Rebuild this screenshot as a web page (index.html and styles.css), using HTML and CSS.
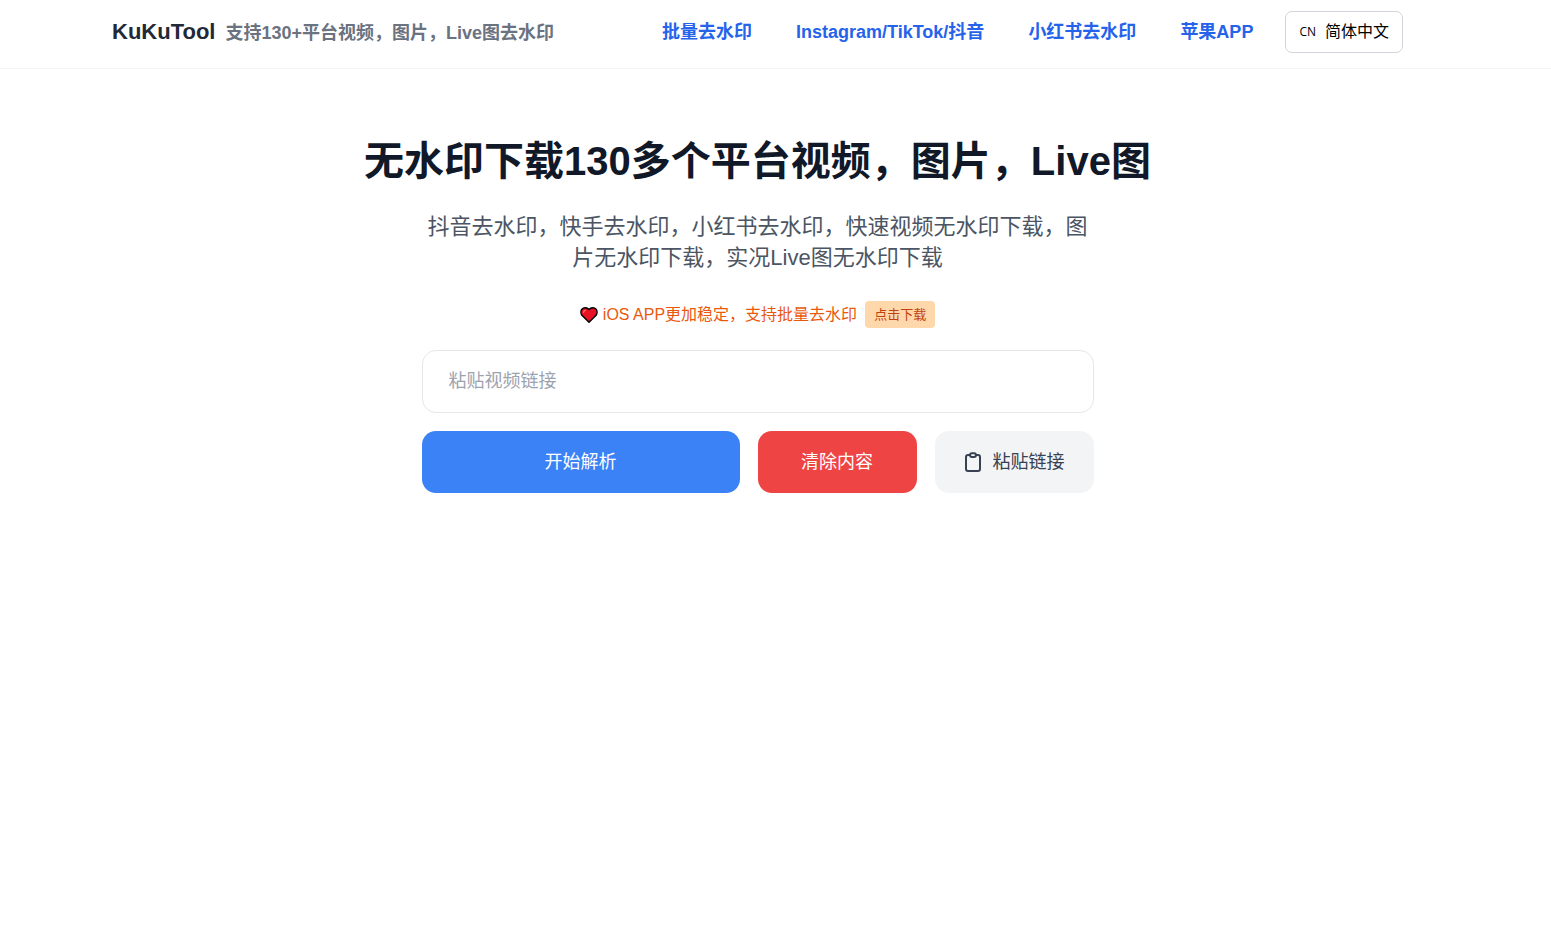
FILE: index.html
```html
<!DOCTYPE html>
<html lang="zh-CN">
<head>
<meta charset="utf-8">
<meta name="viewport" content="width=device-width, initial-scale=1">
<title>KuKuTool</title>
<link rel="stylesheet" href="styles.css">
</head>
<body>
<header class="site-header">
  <div class="header-inner">
    <div class="brand">
      <a class="brand-name" href="#">KuKuTool</a>
      <span class="brand-note">支持130+平台视频，图片，Live图去水印</span>
    </div>
    <div class="header-right">
      <nav class="nav">
        <a href="#">批量去水印</a>
        <a href="#">Instagram/TikTok/抖音</a>
        <a href="#">小红书去水印</a>
        <a href="#">苹果APP</a>
      </nav>
      <button class="lang" type="button"><span class="lang-code">CN</span><span>简体中文</span></button>
    </div>
  </div>
</header>
<main class="main">
  <h1 class="title">无水印下载130多个平台视频，图片，Live图</h1>
  <p class="subtitle">抖音去水印，快手去水印，小红书去水印，快速视频无水印下载，图片无水印下载，实况Live图无水印下载</p>
  <div class="promo">
    <svg class="heart" viewBox="0 0 18 18" aria-hidden="true">
      <path d="M9 16.2 1.900 9.200C.7 7.800.6 5 1.900 3.300 3.700 1.200 7 1.300 9 3.500c2-2.200 5.300-2.300 7.100-.2 1.300 1.700 1.200 4.500 0 5.900Z" fill="#e81224" stroke="#000" stroke-width="1.500" stroke-linejoin="round"/>
      <path d="M3.500 6.500c.1-1.200.7-1.900 1.700-2.100" fill="none" stroke="#f4796b" stroke-width="1.200" stroke-linecap="round"/>
    </svg>
    <span class="promo-text">iOS APP更加稳定，支持批量去水印</span>
    <a class="badge" href="#">点击下载</a>
  </div>
  <form class="form">
    <input class="url" type="text" aria-label="粘贴视频链接" placeholder="粘贴视频链接">
    <div class="actions">
      <button class="btn btn-start" type="button">开始解析</button>
      <button class="btn btn-clear" type="button">清除内容</button>
      <button class="btn btn-paste" type="button">
        <svg class="clip" viewBox="0 0 18 20" aria-hidden="true" fill="none" stroke="#374151" stroke-width="2" stroke-linecap="round" stroke-linejoin="round">
          <path d="M6 3H4a2 2 0 0 0-2 2v12a2 2 0 0 0 2 2h10a2 2 0 0 0 2-2V5a2 2 0 0 0-2-2h-2"/>
          <rect x="6" y="1.200" width="6" height="3.800" rx="1.900"/>
        </svg>
        <span>粘贴链接</span>
      </button>
    </div>
  </form>
</main>
</body>
</html>
```

FILE: styles.css
```css
* {
  box-sizing: border-box;
}

body {
  margin: 0;
  background: #fff;
  color: #111827;
  font-family: "Liberation Sans", Arial, "Noto Sans CJK SC", sans-serif;
  font-size: 18px;
  line-height: 26px;
}

a {
  color: inherit;
  text-decoration: none;
}

button,
input {
  font: inherit;
}

button {
  cursor: pointer;
}

.site-header {
  padding: 11px 36px 15px 0;
  border-bottom: 1px solid #f3f4f6;
}

.header-inner {
  display: flex;
  align-items: center;
  justify-content: space-between;
  max-width: 1291px;
  margin: 0 auto;
}

.brand {
  display: flex;
  align-items: baseline;
  gap: 10px;
  font-weight: 700;
}

.brand-name {
  color: #1f2937;
  font-size: 22px;
}

.brand-note {
  color: #6b7280;
}

.header-right {
  display: flex;
  align-items: center;
  gap: 32px;
}

.nav {
  display: flex;
  gap: 44px;
  color: #2563eb;
  font-weight: 700;
}

.lang {
  display: flex;
  align-items: center;
  gap: 9px;
  height: 42px;
  padding: 0 13px;
  border: 1px solid #d1d5db;
  border-radius: 7px;
  background: #fff;
  color: #000;
  font-size: 16px;
}

.lang-code {
  font-family: "Open Sans", "Noto Sans", sans-serif;
  font-size: 12px;
}

.main {
  display: flex;
  flex-direction: column;
  align-items: center;
  padding: 70px 36px 70px 0;
}

.title {
  margin: 0;
  font-size: 40px;
  line-height: 45px;
  text-align: center;
}

.subtitle {
  max-width: 672px;
  margin: 27px 0 28px;
  color: #4b5563;
  font-size: 22px;
  line-height: 31px;
  text-align: center;
}

.promo {
  display: flex;
  align-items: center;
  margin-bottom: 22px;
  color: #ea580c;
  font-size: 16px;
  line-height: 27px;
}

.heart {
  width: 18px;
  height: 18px;
  margin-right: 5px;
}

.badge {
  margin-left: 8px;
  padding: 0 9px;
  border-radius: 4px;
  background: #fed7aa;
  color: #c2410c;
  font-size: 13px;
}

.form {
  width: 100%;
  max-width: 672px;
}

.url {
  display: block;
  width: 100%;
  height: 63px;
  padding: 0 26px;
  border: 1px solid #e5e7eb;
  border-radius: 14px;
  background: #fff;
}

.url::placeholder {
  color: #9ca3af;
  opacity: 1;
}

.actions {
  display: grid;
  grid-template-columns: 2fr 1fr 1fr;
  gap: 18px;
  margin-top: 18px;
}

.btn {
  display: flex;
  align-items: center;
  justify-content: center;
  gap: 11px;
  height: 62px;
  padding: 0;
  border: 0;
  border-radius: 14px;
  color: #fff;
}

.btn-start {
  background: #3b82f6;
}

.btn-clear {
  background: #ef4444;
}

.btn-paste {
  background: #f3f4f6;
  color: #374151;
}

.clip {
  width: 18px;
  height: 20px;
}
```
